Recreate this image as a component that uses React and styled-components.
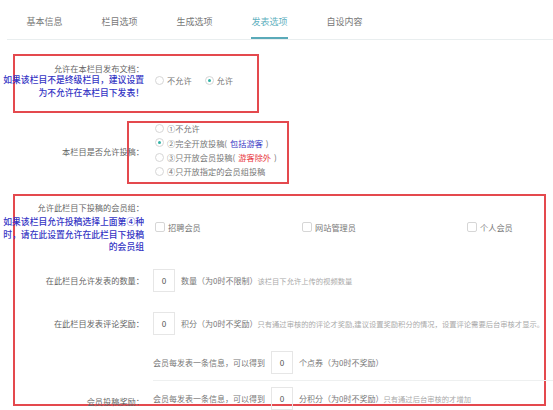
import styled, { createGlobalStyle } from 'styled-components'

const GlobalStyle = createGlobalStyle`
  html, body {
    margin: 0;
    padding: 0;
    background: #fff;
    font-family: "Noto Sans CJK SC", "Noto Sans", sans-serif;
  }
`;

const tabs = ['基本信息', '栏目选项', '生成选项', '发表选项', '自设内容'];

const App = () => {
  return (
    <Page>
      <GlobalStyle />
      <TabBar>
        {tabs.map((t) => (
          <Tab key={t} $active={t === '发表选项'}>
            <span>{t}</span>
          </Tab>
        ))}
      </TabBar>

      <Section $left={13} $width={246} $top={14} $height={59}>
        <Row $pb={6}>
          <Label $offset={13}>
            <span>允许在本栏目发布文档：</span>
            <Note>如果该栏目不是终级栏目，建议设置</Note>
            <Note>为不允许在本栏目下发表！</Note>
          </Label>
          <RadioGroup>
            <Radio><Dot />不允许</Radio>
            <Radio><Dot $checked />允许</Radio>
          </RadioGroup>
        </Row>
      </Section>

      <Section $left={127} $width={162} $top={8} $height={63}>
        <Row $pb={2}>
          <Label $offset={127}>本栏目是否允许投稿：</Label>
          <RadioList>
            <Radio><Dot />①不允许</Radio>
            <Radio><Dot $checked />②完全开放投稿(<Blue>包括游客</Blue>)</Radio>
            <Radio><Dot />③只开放会员投稿(<Red>游客除外</Red>)</Radio>
            <Radio><Dot />④只开放指定的会员组投稿</Radio>
          </RadioList>
        </Row>
      </Section>

      <Section $left={13} $width={533} $top={10} $height={212}>
        <Row $h={62}>
          <Label $offset={13}>
            <Head>允许此栏目下投稿的会员组：</Head>
            <Note>如果该栏目允许投稿选择上面第④种</Note>
            <Note>时，请在此设置允许在此栏目下投稿</Note>
            <Note>的会员组</Note>
          </Label>
          <Groups>
            <Check><Box />招聘会员</Check>
            <Check><Box />网站管理员</Check>
            <Check><Box />个人会员</Check>
          </Groups>
        </Row>
        <Row $h={44}>
          <Label $offset={13}>在此栏目允许发表的数量：</Label>
          <Field>
            <NumInput>0</NumInput>
            <Text>数量（为0时不限制）<Hint>该栏目下允许上传的视频数量</Hint></Text>
          </Field>
        </Row>
        <Row $h={42}>
          <Label $offset={13}>在此栏目发表评论奖励：</Label>
          <Field>
            <NumInput>0</NumInput>
            <Text>积分（为0时不奖励）<Hint>只有通过审核的的评论才奖励,建议设置奖励积分的情况，设置评论需要后台审核才显示。</Hint></Text>
          </Field>
        </Row>
        <Row $h={71} $end>
          <Label $offset={13} $pb={8}>会员投稿奖励：</Label>
          <SubRows>
            <SubRow $h={36}>
              <Text>会员每发表一条信息，可以得到</Text>
              <NumInput>0</NumInput>
              <Text>个点券（为0时不奖励）</Text>
            </SubRow>
            <SubRow $h={34} $line>
              <Text>会员每发表一条信息，可以得到</Text>
              <NumInput>0</NumInput>
              <Text>分积分（为0时不奖励）<Hint>只有通过后台审核的才增加</Hint></Text>
            </SubRow>
          </SubRows>
        </Row>
      </Section>
    </Page>
  );
};

const Page = styled.div`
  width: 553px;
  height: 410px;
  overflow: hidden;
`;

const TabBar = styled.div`
  display: flex;
  margin-left: 7px;
  height: 39px;
  border-bottom: 1px solid #e9eeef;
`;

const Tab = styled.div`
  width: 75px;
  display: flex;
  justify-content: center;
  align-items: flex-end;
  span {
    font-size: 9px;
    line-height: 16px;
    padding-bottom: 7px;
    color: ${(p) => (p.$active ? '#5fb1c0' : '#777')};
    border-bottom: 2px solid ${(p) => (p.$active ? '#5aaab9' : 'transparent')};
    white-space: nowrap;
  }
`;

const Section = styled.div`
  box-sizing: border-box;
  margin-left: ${(p) => p.$left}px;
  margin-top: ${(p) => p.$top}px;
  width: ${(p) => p.$width}px;
  height: ${(p) => p.$height}px;
  border: 2px solid #e4494e;
  display: flex;
  flex-direction: column;
`;

const Row = styled.div`
  display: flex;
  align-items: ${(p) => (p.$end ? 'flex-end' : 'center')};
  gap: 6px;
  height: ${(p) => (p.$h ? `${p.$h}px` : 'auto')};
  flex: ${(p) => (p.$h ? 'none' : '1')};
  padding-bottom: ${(p) => p.$pb || 0}px;
  box-sizing: border-box;
`;

const Label = styled.div`
  flex-shrink: 0;
  box-sizing: border-box;
  width: 147px;
  margin-left: ${(p) => -(p.$offset + 2)}px;
  padding-right: 3px;
  padding-bottom: ${(p) => p.$pb || 0}px;
  text-align: right;
  font-size: 8.2px;
  line-height: 12.5px;
  color: #666;
  white-space: nowrap;
  span {
    display: block;
  }
`;

const Head = styled.span`
  margin-bottom: 3px;
`;

const Note = styled.span`
  display: block;
  color: #3434c4;
  font-weight: 500;
  font-size: 8.8px;
  line-height: 12.5px;
`;

const RadioGroup = styled.div`
  display: flex;
  gap: 13px;
  margin-left: 2px;
`;

const RadioList = styled.div`
  display: flex;
  flex-direction: column;
  margin-top: -3px;
  margin-left: 2px;
`;

const Radio = styled.label`
  display: flex;
  align-items: center;
  gap: 3px;
  font-size: 8.2px;
  line-height: 14.3px;
  color: #777;
  white-space: nowrap;
`;

const Dot = styled.span`
  width: 9px;
  height: 9px;
  box-sizing: border-box;
  border: 1px solid #d6d6d6;
  border-radius: 50%;
  display: inline-flex;
  align-items: center;
  justify-content: center;
  &::after {
    content: '';
    width: 3px;
    height: 3px;
    border-radius: 50%;
    background: ${(p) => (p.$checked ? '#33b2a6' : 'transparent')};
  }
`;

const Blue = styled.span`
  color: #3434c4;
`;

const Red = styled.span`
  color: #e8333a;
`;

const Groups = styled.div`
  display: grid;
  grid-template-columns: 147px 165px 1fr;
  flex: 1;
`;

const Check = styled.label`
  display: flex;
  align-items: center;
  gap: 3px;
  margin-left: 2px;
  font-size: 8.2px;
  color: #777;
  white-space: nowrap;
`;

const Box = styled.span`
  width: 10px;
  height: 10px;
  box-sizing: border-box;
  border: 1px solid #d6d6d6;
  border-radius: 2px;
`;

const Field = styled.div`
  display: flex;
  align-items: center;
  gap: 6px;
  white-space: nowrap;
`;

const NumInput = styled.div`
  width: 22px;
  height: 23px;
  box-sizing: border-box;
  border: 1px solid #e6e6e6;
  display: flex;
  align-items: center;
  justify-content: center;
  font-size: 8.2px;
  color: #555;
  flex-shrink: 0;
`;

const Text = styled.span`
  font-size: 8px;
  color: #777;
  white-space: nowrap;
`;

const Hint = styled.span`
  font-size: 7.3px;
  color: #aaa;
`;

const SubRows = styled.div`
  display: flex;
  flex-direction: column;
  flex: 1;
  margin-right: -12px;
`;

const SubRow = styled.div`
  display: flex;
  align-items: center;
  gap: 6px;
  height: ${(p) => p.$h}px;
  border-top: ${(p) => (p.$line ? '1px solid #eef0f0' : 'none')};
`;

export default App;
